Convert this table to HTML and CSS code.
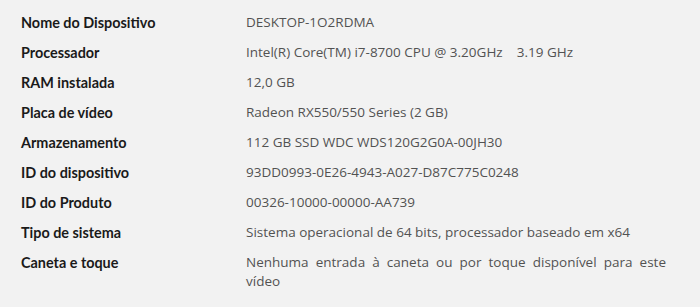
FILE: index.html
```html
<!DOCTYPE html>
<html lang="pt">
<head>
<meta charset="utf-8">
<link rel="stylesheet" href="styles.css">
</head>
<body>
<dl class="specs">
  <dt>Nome do Dispositivo</dt><dd>DESKTOP-1O2RDMA</dd>
  <dt>Processador</dt><dd>Intel(R) Core(TM) i7-8700 CPU @ 3.20GHz&nbsp;&nbsp;&nbsp; 3.19 GHz</dd>
  <dt>RAM instalada</dt><dd>12,0 GB</dd>
  <dt>Placa de vídeo</dt><dd>Radeon RX550/550 Series (2 GB)</dd>
  <dt>Armazenamento</dt><dd>112 GB SSD WDC WDS120G2G0A-00JH30</dd>
  <dt>ID do dispositivo</dt><dd>93DD0993-0E26-4943-A027-D87C775C0248</dd>
  <dt>ID do Produto</dt><dd>00326-10000-00000-AA739</dd>
  <dt>Tipo de sistema</dt><dd>Sistema operacional de 64 bits, processador baseado em x64</dd>
  <dt>Caneta e toque</dt><dd>Nenhuma entrada à caneta ou por toque disponível para este vídeo</dd>
</dl>
</body>
</html>
```
FILE: styles.css
```css
html, body {
  margin: 0;
  padding: 0;
  background: #f2f2f2;
}
body {
  font-family: "Open Sans", "Noto Sans", sans-serif;
  font-size: 13.5px;
}
.specs {
  margin: 0;
  padding: 13px 0 0 21px;
  display: grid;
  grid-template-columns: 225px 420px;
  align-items: start;
  row-gap: 11px;
  line-height: 19px;
}
.specs dt {
  font-family: Lato, Roboto, sans-serif;
  font-size: 14.4px;
  font-weight: 700;
  line-height: 19px;
  color: #1a1a1a;
}
.specs dd {
  margin: 0;
  color: #525252;
  text-align: justify;
}
```
